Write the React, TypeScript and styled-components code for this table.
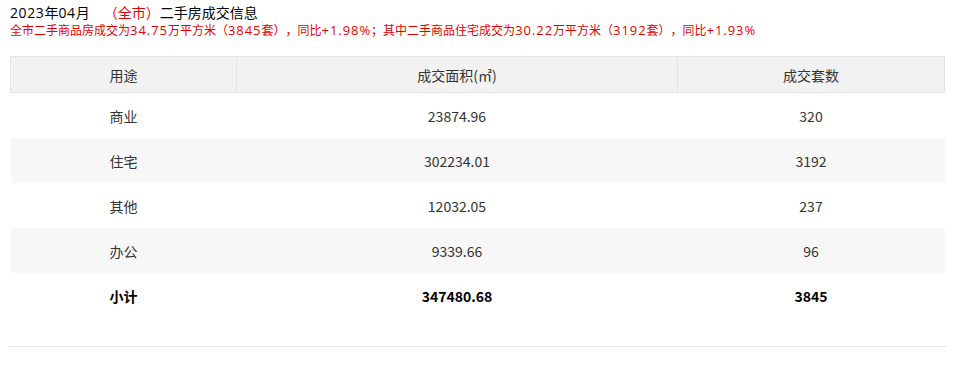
import React from 'react';
import styled, { createGlobalStyle } from 'styled-components';

const GlobalStyle = createGlobalStyle`
	body {
		margin: 0;
		background: #ffffff;
		font-family: "Noto Sans CJK SC", "Microsoft YaHei", sans-serif;
		color: #333333;
		text-spacing-trim: space-all;
	}
`;

const Page = styled.div`
	width: 939px;
	padding: 3px 0 0 8px;
`;

const Title = styled.div`
	padding-left: 2px;
	font-size: 14px;
	line-height: 19px;
	color: #000000;
`;

const Region = styled.span`
	color: #e60000;
	margin-left: 14px;
`;

const Summary = styled.div`
	padding-left: 2px;
	font-size: 12px;
	line-height: 16px;
	color: #e60000;
`;

// latin figures in the reference run wider than the CJK font's own digits
const Num = styled.span<{ $size: number; $spacing: number }>`
	font-family: "Open Sans", "Noto Sans CJK SC", sans-serif;
	font-size: ${(p) => p.$size}px;
	letter-spacing: ${(p) => p.$spacing}px;
`;

const Table = styled.table`
	width: 935px;
	margin: 18px 2px 0;
	border-collapse: collapse;
	table-layout: fixed;
	font-size: 14px;
`;

const HeadCell = styled.th`
	height: 35px;
	padding: 0;
	font-weight: normal;
	color: #333333;
	background: #f2f2f2;
	border: 1px solid #e4e4e4;
	text-align: center;
`;

const Row = styled.tr<{ $shaded?: boolean }>`
	background: ${(p) => (p.$shaded ? '#f7f7f7' : '#ffffff')};
`;

const Cell = styled.td<{ $bold?: boolean }>`
	height: 45px;
	padding: 0;
	text-align: center;
	font-weight: ${(p) => (p.$bold ? 700 : 400)};
	color: ${(p) => (p.$bold ? '#000000' : '#333333')};
`;

const Divider = styled.div`
	margin-top: 28px;
	height: 1px;
	background: #e6e6e6;
`;

const rows = [
	{ use: '商业', area: '23874.96', count: '320' },
	{ use: '住宅', area: '302234.01', count: '3192' },
	{ use: '其他', area: '12032.05', count: '237' },
	{ use: '办公', area: '9339.66', count: '96' },
];

const T = ({ children }: { children: React.ReactNode }) => (
	<Num $size={14} $spacing={0.6}>{children}</Num>
);
const N = ({ children }: { children: React.ReactNode }) => (
	<Num $size={13} $spacing={0.95}>{children}</Num>
);

export default function App() {
	return (
		<>
			<GlobalStyle />
			<Page>
				<Title>
					<T>2023</T>年<T>04</T>月<Region>（全市）</Region>二手房成交信息
				</Title>
				<Summary>
					全市二手商品房成交为<N>34.75</N>万平方米（<N>3845</N>套），同比<N>+1.98%</N>；其中二手商品住宅成交为<N>30.22</N>万平方米（<N>3192</N>套），同比<N>+1.93%</N>
				</Summary>
				<Table>
					<colgroup>
						<col style={{ width: '226px' }} />
						<col style={{ width: '441px' }} />
						<col />
					</colgroup>
					<thead>
						<tr>
							<HeadCell>用途</HeadCell>
							<HeadCell>成交面积(㎡)</HeadCell>
							<HeadCell>成交套数</HeadCell>
						</tr>
					</thead>
					<tbody>
						{rows.map((r, i) => (
							<Row key={r.use} $shaded={i % 2 === 1}>
								<Cell>{r.use}</Cell>
								<Cell>{r.area}</Cell>
								<Cell>{r.count}</Cell>
							</Row>
						))}
						<Row>
							<Cell $bold>小计</Cell>
							<Cell $bold>347480.68</Cell>
							<Cell $bold>3845</Cell>
						</Row>
					</tbody>
				</Table>
				<Divider />
			</Page>
		</>
	);
}
